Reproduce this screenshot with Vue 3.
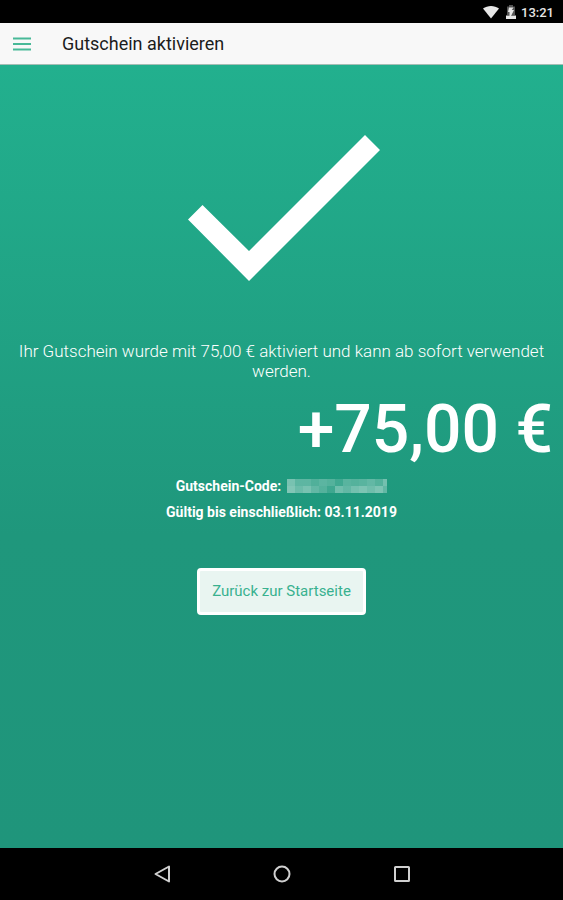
<template>
  <div class="screen">
    <div class="status-bar">
      <svg class="wifi" viewBox="0 0 18 14" aria-hidden="true">
        <path d="M1 3.6C5.5 0 12.5 0 17 3.6L9 13.5z" />
      </svg>
      <svg class="battery" viewBox="0 0 12 16" aria-hidden="true">
        <path class="battery-empty" d="M4 1h4v1.5h2V11H2V2.500h2z" />
        <path d="M1 11.500h10v3.500H1z" />
        <path d="M4 3.500h4.500L6.800 6H9l-3 6H4.500V8H3z" />
      </svg>
      <span class="time">{{ time }}</span>
    </div>

    <header class="toolbar">
      <button class="menu-button" type="button" aria-label="Menü">
        <svg viewBox="0 0 18 14" aria-hidden="true">
          <path d="M0 1.500h18M0 7h18M0 12.500h18" />
        </svg>
      </button>
      <h1>Gutschein aktivieren</h1>
    </header>

    <main class="content">
      <svg class="check" viewBox="0 0 192 148" aria-hidden="true">
        <path d="M0 85.500L14.500 71 61 117 177 1l15 15L61 147z" />
      </svg>
      <p class="message">
        Ihr Gutschein wurde mit {{ amount }} aktiviert und kann ab sofort verwendet werden.
      </p>
      <div class="amount">+{{ amount }}</div>
      <p class="detail">
        Gutschein-Code:
        <svg class="code" viewBox="0 0 100 14" shape-rendering="crispEdges" role="img" aria-label="Code verborgen">
          <rect
            v-for="(block, i) in codeBlocks"
            :key="i"
            :x="block.x"
            :y="block.y"
            width="8"
            height="7"
            :fill-opacity="block.alpha"
          />
        </svg>
      </p>
      <p class="detail">Gültig bis einschließlich: {{ validUntil }}</p>
      <button class="home-button" type="button">Zurück zur Startseite</button>
    </main>

    <nav class="nav-bar">
      <button type="button" aria-label="Zurück">
        <svg viewBox="0 0 18 18"><path d="M16 1.500v15L2.500 9z" /></svg>
      </button>
      <button type="button" aria-label="Home">
        <svg viewBox="0 0 18 18"><circle cx="9" cy="9" r="7.500" /></svg>
      </button>
      <button type="button" aria-label="Übersicht">
        <svg viewBox="0 0 18 18"><rect x="2" y="2" width="14" height="14" rx="0.500" /></svg>
      </button>
    </nav>
  </div>
</template>

<script setup>
const time = '13:21'
const amount = '75,00 €'
const validUntil = '03.11.2019'

// opacity of each block, one list per row
const rows = [
  [0.4, 0.28, 0.28, 0.22, 0.27, 0.24, 0.15, 0.26, 0.24, 0.26, 0.3, 0.24, 0.38],
  [0.44, 0.34, 0.4, 0.3, 0.24, 0.14, 0.36, 0.3, 0.38, 0.42, 0.36, 0.42, 0.3]
]
const codeBlocks = rows.flatMap((row, r) =>
  row.map((alpha, c) => ({ x: c * 8, y: r * 7, alpha }))
)
</script>

<style>
body {
  margin: 0;
  background: #000;
}
</style>

<style scoped>
.screen {
  display: flex;
  flex-direction: column;
  min-height: 100vh;
  font-family: Roboto, "Liberation Sans", sans-serif;
  color: #fff;
}
.status-bar {
  display: flex;
  align-items: center;
  justify-content: flex-end;
  height: 23px;
  padding: 0 9px;
  box-sizing: border-box;
  background: #000;
  color: #e6e6e6;
}
.status-bar svg {
  fill: #e6e6e6;
}
.wifi {
  width: 18px;
  height: 14px;
  margin-right: 5px;
}
.battery {
  width: 12px;
  height: 16px;
  margin-right: 4px;
}
.status-bar .battery-empty {
  fill: #555;
}
.time {
  font-size: 13px;
  font-weight: 500;
  line-height: 23px;
  padding-top: 2px;
}
.toolbar {
  display: flex;
  align-items: center;
  height: 42px;
  box-sizing: border-box;
  padding-left: 13px;
  background: #f8f8f8;
  border-bottom: 1px solid #a5bdb5;
}
.menu-button {
  padding: 0;
  border: none;
  background: none;
  cursor: pointer;
}
.menu-button svg {
  display: block;
  width: 18px;
  height: 14px;
  stroke: #48b998;
  stroke-width: 2;
}
h1 {
  margin: 0 0 0 31px;
  font-size: 18px;
  font-weight: 400;
  line-height: 24px;
  color: #1c1c1c;
}
.content {
  flex: 1;
  display: flex;
  flex-direction: column;
  align-items: center;
  padding: 69px 12px 40px;
  background: linear-gradient(#22b08e, #1f977c 60%, #1f957b);
}
.check {
  width: 192px;
  height: 148px;
  margin-left: 4px;
  fill: #fff;
}
.message {
  margin: 59px 0 0;
  font-size: 17px;
  font-weight: 300;
  line-height: 20px;
  text-align: center;
}
.amount {
  align-self: flex-end;
  margin: 14px 0 8px;
  margin-right: -2px;
  font-size: 66px;
  font-weight: 500;
  line-height: 70px;
}
.detail {
  display: flex;
  align-items: center;
  gap: 6px;
  margin: 0;
  font-size: 14px;
  font-weight: 700;
  line-height: 26px;
}
.code {
  width: 100px;
  height: 14px;
  fill: #fff;
}
.home-button {
  margin-top: 43px;
  padding: 12px;
  border: 3px solid #fff;
  border-radius: 4px;
  background: #e9f5f1;
  font-family: inherit;
  font-size: 15px;
  line-height: 17px;
  color: #38b18f;
  cursor: pointer;
}
.nav-bar {
  display: flex;
  justify-content: center;
  align-items: center;
  gap: 102px;
  height: 52px;
  background: #000;
}
.nav-bar button {
  padding: 0;
  border: none;
  background: none;
  cursor: pointer;
}
.nav-bar svg {
  display: block;
  width: 18px;
  height: 18px;
  fill: none;
  stroke: #d0d0d0;
  stroke-width: 2;
  stroke-linejoin: round;
}
</style>
